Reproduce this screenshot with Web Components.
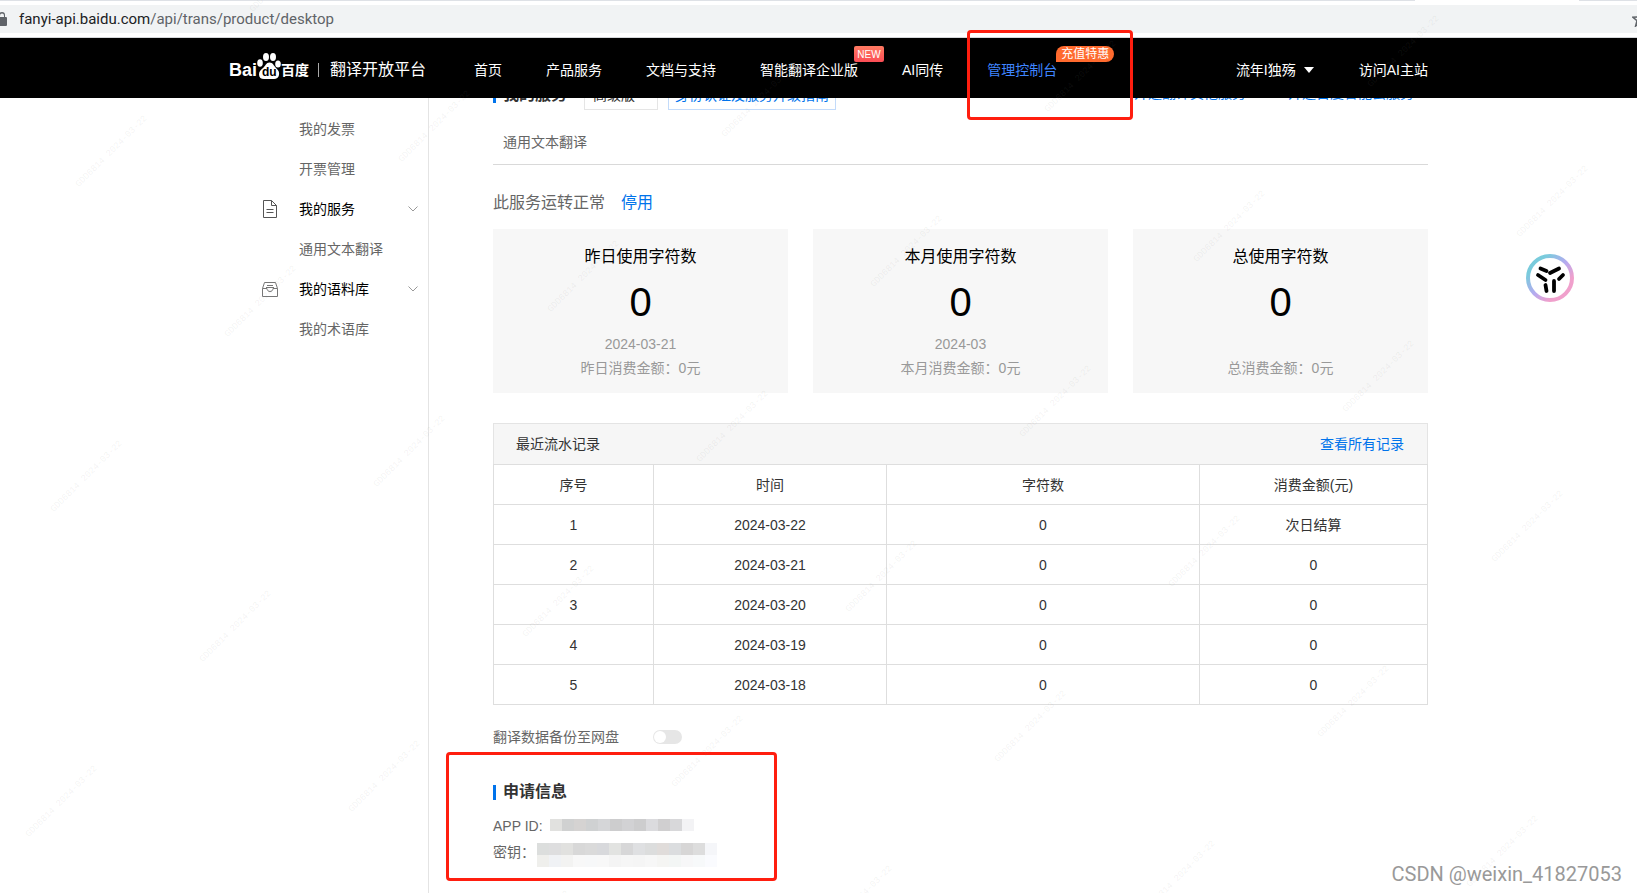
<!DOCTYPE html>
<html lang="zh-CN">
<head>
<meta charset="utf-8">
<title>百度翻译开放平台</title>
<style>
  body { margin: 0; background: #fff; font: 14px/24px "Liberation Sans", "Noto Sans CJK SC", sans-serif; color: #333; }
</style>
</head>
<body>
<translate-page></translate-page>
<script>
const define = (name, html, setup) => customElements.define(name, class extends HTMLElement {
  constructor() {
    super();
    this.attachShadow({ mode: 'open' }).innerHTML = html;
  }
  connectedCallback() { if (setup) setup(this, this.shadowRoot); }
});

define('address-bar', `
<style>
  :host { display: block; height: 38px; box-sizing: border-box; background: #fff; border-bottom: 1px solid #d5d7da; }
  .tabs { height: 5px; display: flex; gap: 164px; }
  .tabs i { height: 1px; background: #dee1e6; flex: 1; }
  .tabs i + i { flex: 0 0 58px; }
  .url { height: 28px; background: #f1f3f4; display: flex; align-items: center; overflow: hidden; color: #5f6368; font: 15px/28px Roboto, sans-serif; }
  .lock { width: 8px; height: 14px; margin-right: 11px; }
  .url b { font-weight: 400; color: #202124; }
  .star { width: 5px; height: 16px; margin-left: auto; }
</style>
<div class="tabs"><i></i><i></i></div>
<div class="url">
  <svg class="lock" viewBox="0 0 8 14"><path d="M-2 5h8q1 0 1 1v7q0 1-1 1h-8zM-1 5V3a3 3 0 0 1 6 0v2" fill="#5f6368"/><path d="M0 5V3.500a2 2 0 0 1 4 0V5" fill="#f1f3f4"/></svg>
  <span><b>fanyi-api.baidu.com</b>/api/trans/product/desktop</span>
  <svg class="star" viewBox="0 0 5 16"><path d="M8 1.500 6.200 6 1 6.300 5 9.700 3.600 15 8 12" fill="none" stroke="#5f6368" stroke-width="1.500"/></svg>
</div>`);

define('brand-logo', `
<style>
  :host { display: block; color: #fff; }
  a { display: flex; align-items: center; color: inherit; text-decoration: none; height: 60px; line-height: 24px; padding-top: 4px; box-sizing: border-box; }
  .latin { font-size: 18px; font-weight: 700; }
  .paw { position: relative; width: 24px; height: 28px; margin: 0 0 10px; }
  .paw svg { display: block; }
  .paw span { position: absolute; left: 5px; top: 14px; font: 700 12px/14px "Liberation Sans", sans-serif; color: #000; }
  .han { font-weight: 700; }
  .rule { width: 1px; height: 14px; background: #aaa; margin: 0 11px 0 9px; }
  .name { font-size: 16px; }
</style>
<a href="#home"><span class="latin">Bai</span><span class="paw"><svg width="24" height="28" viewBox="0 0 24 28" fill="#fff"><ellipse cx="9" cy="6" rx="3" ry="4"/><ellipse cx="16" cy="6" rx="3" ry="4"/><ellipse cx="3" cy="12" rx="2.800" ry="3.800"/><ellipse cx="21" cy="13" rx="2.800" ry="3.600"/><path d="M12.500 11.500c3.500 0 4 3 6.500 5.500s3.500 4 3 7c-.4 2.800-2.500 4-5 4H7c-3 0-5-1.400-5-4.500 0-3 1.500-4.500 4-6.500s3-5.500 6.500-5.500z"/></svg><span>du</span></span><span class="han">百度</span><i class="rule"></i><span class="name">翻译开放平台</span></a>`);

define('red-frame', `
<style>:host { display: block; position: absolute; box-sizing: border-box; border: 3px solid #ff1e0f; border-radius: 4px; pointer-events: none; }</style>`);

define('site-header', `
<style>
  :host { display: block; position: absolute; z-index: 2; top: 0; left: 0; right: 0; padding-left: 20px; background: #000; color: #fff; }
  .inner { max-width: 1199px; margin: 0 auto; height: 60px; display: flex; align-items: center; }
  nav { display: flex; gap: 44px; margin-left: 48px; white-space: nowrap; }
  .user { margin-left: auto; display: flex; gap: 45px; white-space: nowrap; }
  a, button { color: inherit; text-decoration: none; font: inherit; line-height: 60px; padding: 4px 0 0; border: 0; background: none; }
  nav a { position: relative; }
  .active { color: #3f85ff; }
  button { display: flex; align-items: center; gap: 8px; }
  button i { border: 5px solid transparent; border-top: 6px solid #fff; border-bottom: 0; }
  .badge { position: absolute; top: 10px; height: 16px; color: #fff; box-sizing: border-box; text-align: center; }
  .new { left: 94px; width: 30px; border-radius: 2px; background: linear-gradient(#ff7a62, #fb4d55); font-size: 10px; line-height: 17px; }
  .promo { left: 69px; width: 58px; border-radius: 8px 8px 8px 0; background: #ff6a2e; font-size: 12px; line-height: 16px; }
  red-frame { left: -20px; top: -6px; width: 166px; height: 90px; }
</style>
<div class="inner">
  <brand-logo></brand-logo>
  <nav>
    <a href="#index">首页</a><a href="#products">产品服务</a><a href="#docs">文档与支持</a>
    <a href="#enterprise">智能翻译企业版<span class="badge new">NEW</span></a><a href="#interpret">AI同传</a>
    <a class="active" href="#console">管理控制台<span class="badge promo">充值特惠</span><red-frame></red-frame></a>
  </nav>
  <div class="user"><button type="button">流年I独殇<i></i></button><a href="#ai">访问AI主站</a></div>
</div>`);

define('menu-item', `
<style>
  :host { display: block; }
  a { display: flex; align-items: center; height: 40px; padding: 0 10px 0 33px; text-decoration: none; color: #666; }
  .icon { width: 16px; height: 40px; margin-right: 21px; display: flex; align-items: center; }
  :host([group]) a { color: #000; }
  .chev { display: none; margin-left: auto; }
  :host([group]) .chev { display: block; }
</style>
<a href="#menu"><span class="icon"><slot name="icon"></slot></span><slot></slot><svg class="chev" width="10" height="6" viewBox="0 0 10 6"><path d="M.5.5 5 5 9.500.5" fill="none" stroke="#999"/></svg></a>`);

define('side-menu', `
<style>
  :host { display: block; box-sizing: border-box; flex: 0 0 200px; padding-top: 71px; border-right: 1px solid #e4e4e4; }
</style>
<menu-item>我的发票</menu-item>
<menu-item>开票管理</menu-item>
<menu-item group><svg slot="icon" width="16" height="18" viewBox="0 0 16 18" fill="none" stroke="#555"><path d="M1.500.5h8l5 5v12h-13zM9.500.5v5h5M4.500 9.500h7M4.500 12.500h7"/></svg>我的服务</menu-item>
<menu-item>通用文本翻译</menu-item>
<menu-item group><svg slot="icon" width="16" height="17" viewBox="0 0 16 17" fill="none" stroke="#777"><path d="M.5 7.500 2.500 1.500h11l2 6v8H.5zM.5 7.500h4.500c0 4 6 4 6 0h4.500M5 4.500h6M4 6.500h8"/></svg>我的语料库</menu-item>
<menu-item>我的术语库</menu-item>`);

define('section-title', `
<style>
  :host { display: block; }
  h2 { margin: 0; display: flex; align-items: center; gap: 7px; font-size: 16px; line-height: 24px; font-weight: 700; color: #333; }
  i { width: 3px; height: 15px; background: #0073eb; }
</style><h2><i></i><slot></slot></h2>`);

define('service-head', `
<style>
  :host { display: block; }
  .row { display: flex; align-items: center; height: 30px; white-space: nowrap; }
  select { appearance: none; box-sizing: border-box; width: 74px; height: 30px; margin: 0 10px 0 17px; padding: 0 8px; border: 1px solid #e5e5e5; border-radius: 0; background: #fff; font: inherit; color: #333; }
  .guide { box-sizing: border-box; height: 30px; padding: 0 6px; border: 1px solid #c3dbfa; line-height: 28px; }
  a { color: #0073eb; text-decoration: none; }
  .links { margin-left: auto; display: flex; gap: 42px; padding: 0 14px 4px 0; }
  .tab { margin-top: 12px; padding: 0 10px 2px; line-height: 40px; border-bottom: 1px solid #d9d9d9; color: #666; }
  .status { margin: 26px 0 0; font-size: 16px; line-height: 24px; color: #666; }
  button { margin-left: 16px; padding: 0; border: 0; background: none; font: inherit; color: #0073eb; }
</style>
<div class="row"><section-title>我的服务</section-title>
  <select aria-label="服务版本"><option>高级版</option></select>
  <a class="guide" href="#guide">身份认证及服务升级指南</a>
  <div class="links"><a href="#other">开通翻译其他服务</a><a href="#cloud">开通百度智能云服务</a></div>
</div>
<div class="tab">通用文本翻译</div>
<p class="status">此服务运转正常<button type="button">停用</button></p>`);

define('usage-card', `
<style>
  :host { display: block; flex: 1; padding: 16px 0 13px; background: #f7f7f7; text-align: center; color: #999; }
  h3 { margin: 0; font-size: 16px; font-weight: 400; line-height: 24px; color: #000; }
  .value { margin: 10px 0 7px; font-size: 40px; line-height: 46px; color: #000; }
  .date { min-height: 24px; }
</style>
<h3><slot name="title"></slot></h3><div class="value">0</div><div class="date"><slot name="date"></slot></div><div><slot></slot></div>`);

define('record-table', `
<style>
  :host { display: block; margin-top: 30px; }
  .bar { display: flex; justify-content: space-between; padding: 0 23px 0 22px; line-height: 40px; background: #f6f6f6; border: 1px solid #e4e4e4; border-bottom: 0; }
  a { color: #0073eb; text-decoration: none; }
  table { width: 100%; table-layout: fixed; border-collapse: collapse; }
  th, td { height: 39px; padding: 0; border: 1px solid #dedede; text-align: center; font-weight: 400; }
</style>
<div class="bar"><span>最近流水记录</span><a href="#records">查看所有记录</a></div>
<table>
  <colgroup><col style="width:160px"><col style="width:233px"><col style="width:313px"><col></colgroup>
  <thead><tr><th>序号</th><th>时间</th><th>字符数</th><th>消费金额(元)</th></tr></thead>
  <tbody></tbody>
</table>`, (host, root) => {
  root.querySelector('tbody').innerHTML = [22, 21, 20, 19, 18].map((day, i) =>
    `<tr><td>${i + 1}</td><td>2024-03-${day}</td><td>0</td><td>${i ? 0 : '次日结算'}</td></tr>`).join('');
});

define('backup-switch', `
<style>
  :host { display: block; margin-top: 20px; color: #666; }
  label { display: flex; align-items: center; gap: 34px; }
  input { appearance: none; box-sizing: border-box; width: 29px; height: 14px; margin: 0; padding: 1px; border-radius: 7px; background: #e6e6e6; }
  input::before { content: ""; display: block; width: 12px; height: 12px; border-radius: 6px; background: #fff; }
  input:checked { background: #0073eb; padding-left: 16px; }
</style><label>翻译数据备份至网盘<input type="checkbox" role="switch"></label>`);

define('masked-value', `
<style>:host { display: block; } svg { display: block; }</style><svg height="24"></svg>`, (host, root) => {
  // Each row of the mosaic is a comma-separated list of 12px cells.
  const rows = host.getAttribute('cells').split('/').map(r => r.split(','));
  const svg = root.querySelector('svg');
  svg.setAttribute('width', 12 * rows[0].length);
  svg.setAttribute('height', 12 * rows.length);
  svg.innerHTML = rows.map((r, y) => r.map((c, x) =>
    `<rect x="${x * 12}" y="${y * 12}" width="12" height="12" fill="#${c}"/>`).join('')).join('');
});

define('app-info', `
<style>
  :host { display: block; position: relative; margin-top: 31px; color: #666; }
  dl { margin: 9px 0 0; line-height: 26px; }
  dl div { display: flex; height: 26px; }
  dt, dd { margin: 0; }
  .id dd { margin-left: 7px; padding-top: 6px; }
  .key dd { margin-left: 2px; padding-top: 4px; }
  red-frame { left: -47px; top: -28px; width: 331px; height: 129px; }
</style>
<section-title>申请信息</section-title>
<dl>
  <div class="id"><dt>APP ID:</dt><dd><masked-value cells="e1e1df,d0d1d1,d5d3d2,cfd1d2,d5d6d8,cdcdce,d2d2d4,cdcdce,dbdbde,d0cfd0,d8d8da,f3f3f5"></masked-value></dd></div>
  <div class="key"><dt>密钥：</dt><dd><masked-value cells="dcdedd,dededf,e1e1df,d8d8d8,dadada,d8d9dc,e2e3e1,d7d7d8,dfe0e2,dcdddd,e0dcda,dbdddf,d7d6d6,dddddd,f5f6f9/efefec,f0f2f5,f3f3f2,f8f8f8,f7f8f9,f8f8f8,f4f4f4,f6f6f6,f5f5f5,f7f7f7,f5f5f3,f3f6f5,f7f7f8,f7f9fa,fafbfe"></masked-value></dd></div>
</dl>
<red-frame></red-frame>`);

define('assistant-button', `
<style>
  :host { display: block; position: absolute; z-index: 3; right: 63px; top: 216px; }
  button { display: block; border: 0; padding: 0; background: none; }
  svg { display: block; }
</style>
<button type="button" aria-label="助手"><svg width="48" height="48" viewBox="0 0 48 48"><defs><linearGradient id="ring" x1="0" y1="0" x2="1" y2="1"><stop offset=".2" stop-color="#79cbdc"/><stop offset=".5" stop-color="#b5aaf0"/><stop offset=".75" stop-color="#f0a0cc"/></linearGradient></defs><circle cx="24" cy="24" r="22" fill="#fff" stroke="url(#ring)" stroke-width="4"/><path d="M14.500 14.500 20.500 17M24 19l9-4.500M12 21l7.500 5M33 25l4-4M19.500 31l1 6M28 27v10" fill="none" stroke="#000" stroke-width="3.800" stroke-linecap="round"/></svg></button>`);

define('trace-marks', `
<style>
  :host { display: block; position: absolute; inset: 0; z-index: 4; overflow: hidden; pointer-events: none; }
  svg { display: block; width: 100%; height: 100%; }
  text { font: 9px "Liberation Mono", monospace; fill: #808080; fill-opacity: .1; text-anchor: middle; }
</style><svg aria-hidden="true"></svg>`, (host, root) => {
  // The stamps sit on a slanted lattice that covers the whole window.
  let out = '';
  for (let i = -12; i < 12; i++) for (let j = -10; j < 10; j++) {
    const x = 88 + i * 149 + j * 323, y = 478 + i * 150 - j * 25;
    if (x > -40 && x < innerWidth + 40 && y > -40 && y < innerHeight + 40)
      out += `<text transform="translate(${x} ${y}) rotate(-45)">GDD6814 2024-03-22</text>`;
  }
  root.querySelector('svg').innerHTML = out;
});

define('author-mark', `
<style>:host { display: block; position: absolute; z-index: 5; right: 15px; bottom: 7px; font: 20px/24px Roboto, sans-serif; color: #999; text-shadow: -1px -1px 0 #fff; }</style>
CSDN @weixin_41827053`);

define('translate-page', `
<style>
  :host { display: flex; flex-direction: column; position: relative; min-height: 100vh; overflow: hidden; }
  .stage { position: relative; flex: 1; display: flex; padding-left: 20px; }
  .columns { flex: 1; display: flex; max-width: 1199px; margin: 0 auto; }
  main { flex: 1; padding: 42px 0 20px 64px; min-width: 0; }
  .cards { display: flex; gap: 25px; margin-top: 14px; }
</style>
<address-bar></address-bar>
<div class="stage">
  <site-header></site-header>
  <div class="columns">
    <side-menu></side-menu>
    <main>
      <service-head></service-head>
      <div class="cards">
        <usage-card><span slot="title">昨日使用字符数</span><span slot="date">2024-03-21</span>昨日消费金额：0元</usage-card>
        <usage-card><span slot="title">本月使用字符数</span><span slot="date">2024-03</span>本月消费金额：0元</usage-card>
        <usage-card><span slot="title">总使用字符数</span>总消费金额：0元</usage-card>
      </div>
      <record-table></record-table>
      <backup-switch></backup-switch>
      <app-info></app-info>
    </main>
  </div>
  <assistant-button></assistant-button>
</div>
<trace-marks></trace-marks>
<author-mark></author-mark>`);
</script>
</body>
</html>
